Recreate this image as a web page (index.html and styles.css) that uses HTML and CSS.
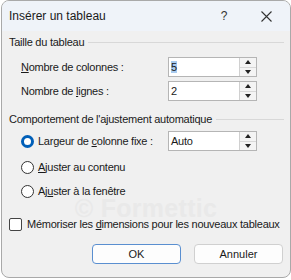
FILE: index.html
```html
<!DOCTYPE html>
<html lang="fr">
<head>
  <meta charset="UTF-8" />
  <title>Insérer un tableau</title>
  <link rel="stylesheet" href="styles.css">
</head>
<body>
  <div class="dialog">
    <div class="titlebar">
      <span class="title">Insérer un tableau</span>
      <span class="help">?</span>
      <span class="close">
        <svg width="11" height="11" viewBox="0 0 11 11"><path d="M0.5 0.5 L10.5 10.5 M10.5 0.5 L0.5 10.5" stroke="#333" stroke-width="1.1" fill="none"/></svg>
      </span>
    </div>

    <div class="content">
      <div class="group-title"><span>Taille du tableau</span></div>

      <div class="field first">
        <span class="label"><span><u>N</u>ombre de colonnes :</span></span>
        <div class="spin">
          <span class="spin-value"><span class="selected">5</span></span>
          <span class="spin-buttons"><span class="up"></span><span class="down"></span></span>
        </div>
      </div>
      <div class="field">
        <span class="label"><span>Nombre de <u>l</u>ignes :</span></span>
        <div class="spin">
          <span class="spin-value">2</span>
          <span class="spin-buttons"><span class="up"></span><span class="down"></span></span>
        </div>
      </div>

      <div class="group-title second"><span>Comportement de l'ajustement automatique</span></div>

      <div class="field radio-field">
        <span class="label"><span class="radio checked"></span><span>Largeur de <u>c</u>olonne fixe :</span></span>
        <div class="spin">
          <span class="spin-value">Auto</span>
          <span class="spin-buttons"><span class="up"></span><span class="down"></span></span>
        </div>
      </div>
      <div class="option first-option"><span class="radio"></span><span><u>A</u>juster au contenu</span></div>
      <div class="option"><span class="radio"></span><span>Aj<u>u</u>ster à la fenêtre</span></div>

      <div class="check-row"><span class="checkbox"></span><span>Mémoriser les <u>d</u>imensions pour les nouveaux tableaux</span></div>

      <div class="buttons">
        <button class="btn default">OK</button>
        <button class="btn">Annuler</button>
      </div>

      <div class="watermark">© Formettic</div>
    </div>
  </div>
</body>
</html>
```

FILE: styles.css
```css
body {
  margin: 0;
  background: #ffffff;
  font-family: 'Liberation Sans', Arial, sans-serif;
  font-size: 11px;
  letter-spacing: -0.25px;
  color: #1a1a1a;
  white-space: nowrap;
}

u {
  text-underline-offset: 1px;
}

.dialog {
  width: 288px;
  height: 276px;
  margin-left: 1px;
  border: 1px solid #a9a9a9;
  border-radius: 8px;
  overflow: hidden;
  background: #f0f0f0;
}

.titlebar {
  height: 30px;
  display: flex;
  align-items: center;
  background: #eff3f9;
  padding-left: 7px;
}

.title {
  flex: 1;
  font-size: 12px;
  letter-spacing: 0;
}

.help {
  width: 10px;
  margin-right: 32px;
  text-align: center;
  font-size: 12px;
  color: #333;
}

.close {
  width: 11px;
  margin-right: 18px;
  display: flex;
}

.content {
  position: relative;
  padding: 1px 6px 0 7px;
}

.group-title {
  display: flex;
  align-items: center;
  gap: 4px;
  height: 20px;
}

.group-title::after {
  content: "";
  flex: 1;
  height: 1px;
  margin-top: 1px;
  background: #d8d8d8;
}

.group-title.second {
  margin-top: 6px;
}

.field {
  display: flex;
  align-items: center;
  height: 24px;
  padding-left: 12px;
}

.field.first {
  margin-top: 3px;
}

.field .label {
  width: 147px;
  display: flex;
  align-items: center;
}

.spin {
  width: 87px;
  height: 18px;
  display: flex;
  border: 1px solid #b5b5b5;
  background: #fff;
}

.spin-value {
  flex: 1;
  padding-left: 2px;
  line-height: 18px;
}

.selected {
  background: #a8cbef;
}

.spin-buttons {
  width: 16px;
  display: flex;
  flex-direction: column;
  border-left: 1px solid #d0d0d0;
  background: #f4f4f4;
}

.spin-buttons span {
  flex: 1;
  position: relative;
}

.spin-buttons .up {
  border-bottom: 1px solid #d8d8d8;
}

.spin-buttons span::after {
  content: "";
  position: absolute;
  left: 5px;
  top: 2px;
  border-left: 3px solid transparent;
  border-right: 3px solid transparent;
}

.spin-buttons .up::after {
  border-bottom: 4px solid #222;
}

.spin-buttons .down::after {
  border-top: 4px solid #222;
  top: 2px;
}

.radio {
  width: 11px;
  height: 11px;
  border: 1px solid #333;
  border-radius: 50%;
  margin-right: 4px;
  flex: none;
  background: #fff;
}

.radio.checked {
  width: 7px;
  height: 7px;
  border: 3px solid #005fb8;
}

.option {
  display: flex;
  align-items: center;
  height: 24px;
  padding-left: 12px;
}

.first-option {
  margin-top: 2px;
}

/* filigrane posé sur le contenu */
.watermark {
  position: absolute;
  left: 0;
  right: 0;
  top: 168px;
  text-align: center;
  font-size: 25px;
  font-weight: bold;
  letter-spacing: 0.3px;
  line-height: 18px;
  color: #e9e9e9;
  pointer-events: none;
}

.check-row {
  position: relative;
  z-index: 1;
  display: flex;
  align-items: center;
  height: 18px;
  margin-top: 12px;
}

.checkbox {
  width: 11px;
  height: 11px;
  border: 1px solid #444;
  border-radius: 2px;
  margin-right: 5px;
  flex: none;
  background: #fff;
}

.buttons {
  display: flex;
  justify-content: flex-end;
  gap: 13px;
  margin-top: 11px;
  padding-right: 1px;
}

.btn {
  width: 89px;
  height: 20px;
  font-family: inherit;
  font-size: 11px;
  color: #1a1a1a;
  background: #fdfdfd;
  border: 1px solid #d0d0d0;
  border-radius: 4px;
  padding: 0;
}

.btn.default {
  border-color: #5a8fd0;
}
```
